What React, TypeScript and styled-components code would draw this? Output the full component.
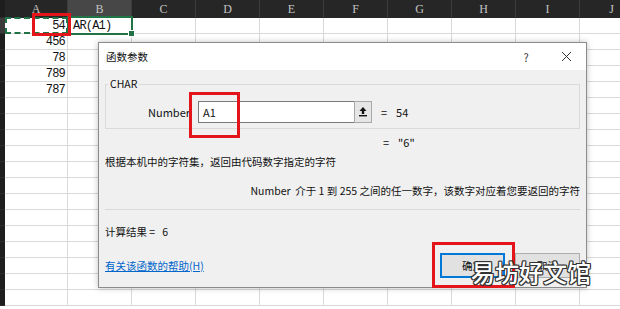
import React from 'react';
import styled, { createGlobalStyle, css } from 'styled-components';

const GlobalStyle = createGlobalStyle`
  html, body {
    margin: 0;
    padding: 0;
    background: #ffffff;
    overflow: hidden;
  }
`;

const COLS = ['A', 'B', 'C', 'D', 'E', 'F', 'G', 'H', 'I', 'J'];
const VALUES = ['54', '456', '78', '789', '787'];
const ROW_COUNT = 18;

const Page = styled.div`
  position: relative;
  width: 620px;
  height: 309px;
  overflow: hidden;
  background: #ffffff;
`;

const Sheet = styled.div`
  display: grid;
  grid-template-columns: 5px 63px repeat(9, 64px);
  grid-auto-rows: 16px;
  grid-template-rows: 18px;
`;

const Corner = styled.div<{ active?: boolean }>`
  background: ${({ active }) => (active ? '#3a3a3a' : '#1e1e1e')};
  border-bottom: 1px solid #2e2e2e;
  box-sizing: border-box;
`;

const ColHeader = styled.div<{ active?: boolean }>`
  display: flex;
  align-items: center;
  justify-content: center;
  background: ${({ active }) => (active ? '#474747' : '#262626')};
  border-right: 1px solid #3c3c3c;
  box-sizing: border-box;
  color: #c4c4c4;
  font-family: 'Liberation Serif', serif;
  font-size: 12px;
`;

const Cell = styled.div<{ align?: 'left' | 'right'; mark?: 'marquee' | 'selected' }>`
  position: relative;
  display: flex;
  align-items: center;
  justify-content: ${({ align }) => (align === 'right' ? 'flex-end' : 'flex-start')};
  padding: 0 2px 0 5px;
  box-sizing: border-box;
  border-right: 1px solid #d9d9d9;
  border-bottom: 1px solid #d9d9d9;
  white-space: nowrap;
  overflow: visible;
  font-family: 'Liberation Mono', monospace;
  font-size: 12px;
  letter-spacing: -0.8px;
  color: #111111;
  z-index: ${({ mark }) => (mark ? 1 : 0)};

  ${({ mark }) =>
    mark === 'marquee' &&
    css`
      &::after {
        content: '';
        position: absolute;
        inset: -1px -1px -1px 0;
        border: 2px dashed #217346;
      }
    `}

  ${({ mark }) =>
    mark === 'selected' &&
    css`
      &::after {
        content: '';
        position: absolute;
        inset: -2px -2px -2px -1px;
        border: 2px solid #217346;
      }
      &::before {
        content: '';
        position: absolute;
        right: -4px;
        bottom: -4px;
        width: 5px;
        height: 5px;
        background: #217346;
        border: 1px solid #ffffff;
        z-index: 2;
      }
    `}
`;

/* dialog */

const Dialog = styled.div`
  position: absolute;
  left: 98px;
  top: 42px;
  width: 489px;
  height: 246px;
  box-sizing: border-box;
  border: 1px solid #8c8c8c;
  background: #f0f0f0;
  box-shadow: 0 0 6px rgba(0, 0, 0, 0.25);
  display: flex;
  flex-direction: column;
  font-family: 'Noto Sans CJK SC', 'Noto Sans', sans-serif;
  font-size: 10.5px;
  color: #111111;
`;

const TitleBar = styled.div`
  height: 27px;
  flex-shrink: 0;
  display: flex;
  align-items: center;
  padding: 0 0 0 7px;
  background: #ffffff;
`;

const TitleText = styled.span`
  flex: 1;
`;

const TitleButton = styled.span`
  width: 40px;
  display: flex;
  align-items: center;
  justify-content: center;
  font-size: 11px;
  color: #333333;
`;

const Body = styled.div`
  flex: 1;
  display: flex;
  flex-direction: column;
  padding: 0 6px 0 6px;
`;

const GroupBox = styled.fieldset`
  margin: 8px 0 0 0;
  padding: 10px 0 5px 0;
  border: 1px solid #dadada;
  min-width: 0;
`;

const Legend = styled.legend`
  padding: 0 2px;
  margin-left: 2px;
  font-size: 10.5px;
  line-height: 12px;
`;

const ArgRow = styled.div`
  display: flex;
  align-items: center;
  height: 23px;
`;

const ArgLabel = styled.span`
  width: 84px;
  text-align: right;
  font-size: 11px;
`;

const ArgInput = styled.div`
  margin-left: 8px;
  width: 156px;
  height: 22px;
  box-sizing: border-box;
  border: 1px solid #7a7a7a;
  border-right: none;
  background: #ffffff;
  display: flex;
  align-items: center;
  padding-left: 4px;
  font-size: 11px;
`;

const RefButton = styled.span`
  width: 18px;
  height: 22px;
  box-sizing: border-box;
  border: 1px solid #a8a8a8;
  background: #e6e6e6;
  display: flex;
  align-items: center;
  justify-content: center;
`;

const Equals = styled.span`
  margin-left: 9px;
  display: inline-flex;
  gap: 9px;
  font-size: 11px;
`;

const ValueLine = styled.div`
  padding-left: 269px;
  margin-top: 5px;
  height: 16px;
  display: flex;
  align-items: center;
`;

const PlainLine = styled.div<{ right?: boolean }>`
  height: 16px;
  display: flex;
  align-items: center;
  justify-content: ${({ right }) => (right ? 'flex-end' : 'flex-start')};
  white-space: pre;
`;

const Separator = styled.div`
  height: 1px;
  background: #dadada;
  margin: 11px 0 13px 0;
`;

const Footer = styled.div`
  display: flex;
  align-items: center;
  margin-top: 14px;
`;

const HelpLink = styled.a`
  flex: 1;
  color: #0066cc;
  text-decoration: underline;
  font-size: 10.5px;
`;

const DialogButton = styled.button<{ primary?: boolean }>`
  width: 65px;
  height: 25px;
  margin-left: 10px;
  box-sizing: border-box;
  background: #e1e1e1;
  border: ${({ primary }) => (primary ? '2px solid #0078d7' : '1px solid #adadad')};
  font-family: 'Noto Sans CJK SC', sans-serif;
  font-size: 10.5px;
  color: #111111;
  padding: 0;
`;

/* overlays */

const RedMark = styled.div`
  position: absolute;
  box-sizing: border-box;
  border: 3px solid #e3151a;
  z-index: 5;
`;

const Watermark = styled.div`
  position: absolute;
  left: 471px;
  top: 256px;
  z-index: 6;
  font-family: 'Noto Sans CJK SC', sans-serif;
  font-size: 24px;
  font-weight: 500;
  line-height: 32px;
  color: #ffffff;
  text-shadow:
    1px 1px 0 #333, -1px -1px 0 #333, 1px -1px 0 #333, -1px 1px 0 #333,
    0 1px 0 #333, 0 -1px 0 #333, 1px 0 0 #333, -1px 0 0 #333;
`;

const UpArrow = () => (
  <svg width="10" height="11" viewBox="0 0 10 11">
    <path d="M5 1 L1.5 5 H3.8 V8 H6.2 V5 H8.5 Z" fill="#111" />
    <rect x="1" y="9" width="8" height="1.4" fill="#111" />
  </svg>
);

const CloseIcon = () => (
  <svg width="11" height="11" viewBox="0 0 11 11">
    <path d="M1 1 L10 10 M10 1 L1 10" stroke="#333" strokeWidth="1" />
  </svg>
);

export default function App() {
  return (
    <Page>
      <GlobalStyle />
      <Sheet>
        <Corner />
        {COLS.map((c) => (
          <ColHeader key={c} active={c === 'B'}>
            {c}
          </ColHeader>
        ))}
        {Array.from({ length: ROW_COUNT }).map((_, r) => (
          <React.Fragment key={r}>
            <Corner active={r === 0} />
            <Cell align="right" mark={r === 0 ? 'marquee' : undefined}>
              {VALUES[r] ?? ''}
            </Cell>
            <Cell mark={r === 0 ? 'selected' : undefined}>{r === 0 ? 'AR(A1)' : ''}</Cell>
            {COLS.slice(2).map((c) => (
              <Cell key={c} />
            ))}
          </React.Fragment>
        ))}
      </Sheet>

      <Dialog>
        <TitleBar>
          <TitleText>函数参数</TitleText>
          <TitleButton>?</TitleButton>
          <TitleButton>
            <CloseIcon />
          </TitleButton>
        </TitleBar>
        <Body>
          <GroupBox>
            <Legend>CHAR</Legend>
            <ArgRow>
              <ArgLabel>Number</ArgLabel>
              <ArgInput>A1</ArgInput>
              <RefButton>
                <UpArrow />
              </RefButton>
              <Equals>
                <span>=</span>
                <span>54</span>
              </Equals>
            </ArgRow>
          </GroupBox>
          <ValueLine>
            <Equals>
              <span>=</span>
              <span>"6"</span>
            </Equals>
          </ValueLine>
          <PlainLine style={{ marginTop: 3 }}>根据本机中的字符集，返回由代码数字指定的字符</PlainLine>
          <PlainLine right style={{ marginTop: 13 }}>
            Number  介于 1 到 255 之间的任一数字，该数字对应着您要返回的字符
          </PlainLine>
          <Separator />
          <PlainLine>计算结果 =   6</PlainLine>
          <Footer>
            <HelpLink>有关该函数的帮助(H)</HelpLink>
            <DialogButton primary>确定</DialogButton>
            <DialogButton>取消</DialogButton>
          </Footer>
        </Body>
      </Dialog>

      <RedMark style={{ left: 32, top: 13, width: 39, height: 23 }} />
      <RedMark style={{ left: 189, top: 92, width: 51, height: 46 }} />
      <RedMark style={{ left: 432, top: 242, width: 83, height: 46 }} />
      <Watermark>易坊好文馆</Watermark>
    </Page>
  );
}
